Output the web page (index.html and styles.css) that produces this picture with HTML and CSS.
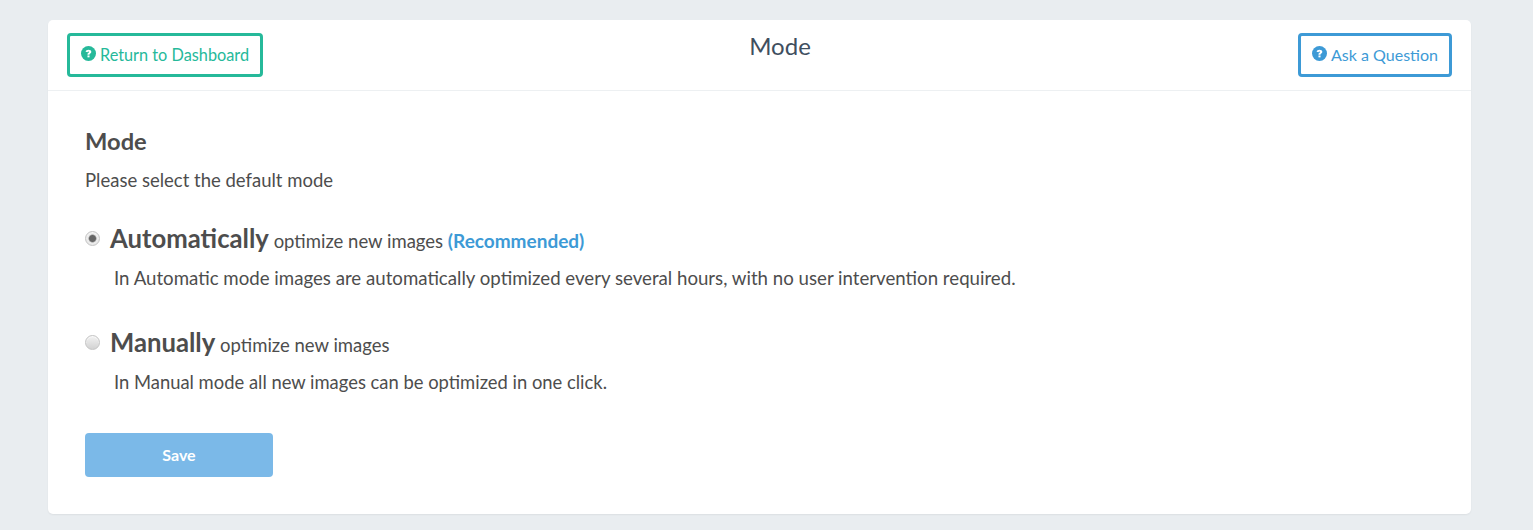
FILE: index.html
```html
<!DOCTYPE html>
<html lang="en">
<head>
    <meta charset="UTF-8">
    <title>Mode</title>
    <link rel="stylesheet" href="styles.css">
</head>
<body>
    <div class="card">
        <div class="card-header">
            <a href="#" class="btn-outline btn-green">
                <svg class="help-icon" viewBox="0 0 16 16"><circle cx="8" cy="8" r="8" fill="currentColor"/><path d="M4.9 6.2c.2-1.4 1.4-2.3 3.1-2.3 1.8 0 3 .9 3 2.3 0 1.1-.7 1.6-1.3 2-.5.3-.7.5-.7 1v.2H6.9v-.4c0-1 .4-1.4 1-1.8.4-.3.7-.5.7-.8 0-.4-.3-.6-.7-.6-.5 0-.8.3-.9.8z" fill="#fff"/><rect x="6.9" y="10.1" width="2.2" height="2" fill="#fff"/></svg>
                Return to Dashboard
            </a>
            <h2 class="card-title">Mode</h2>
            <a href="#" class="btn-outline btn-blue">
                <svg class="help-icon" viewBox="0 0 16 16"><circle cx="8" cy="8" r="8" fill="currentColor"/><path d="M4.9 6.2c.2-1.4 1.4-2.3 3.1-2.3 1.8 0 3 .9 3 2.3 0 1.1-.7 1.6-1.3 2-.5.3-.7.5-.7 1v.2H6.9v-.4c0-1 .4-1.4 1-1.8.4-.3.7-.5.7-.8 0-.4-.3-.6-.7-.6-.5 0-.8.3-.9.8z" fill="#fff"/><rect x="6.9" y="10.1" width="2.2" height="2" fill="#fff"/></svg>
                Ask a Question
            </a>
        </div>

        <form class="card-body">
            <h3 class="section-title">Mode</h3>
            <p class="section-sub">Please select the default mode</p>

            <div class="mode-option">
                <label class="mode-label">
                    <input type="radio" name="mode" class="mode-radio" checked>
                    <span><strong class="mode-name">Automatically</strong> optimize new images <b class="recommended">(Recommended)</b></span>
                </label>
                <p class="mode-desc">In Automatic mode images are automatically optimized every several hours, with no user intervention required.</p>
            </div>

            <div class="mode-option">
                <label class="mode-label">
                    <input type="radio" name="mode" class="mode-radio">
                    <span><strong class="mode-name">Manually</strong> optimize new images</span>
                </label>
                <p class="mode-desc mode-desc-short">In Manual mode all new images can be optimized in one click.</p>
            </div>

            <button type="button" class="btn-save">Save</button>
        </form>
    </div>
</body>
</html>
```

FILE: styles.css
```css
* {
    margin: 0;
    padding: 0;
    box-sizing: border-box;
}

body {
    background-color: #e9edf0;
    font-family: Lato, sans-serif;
    color: #4d4d4d;
    padding: 20px 62px 16px 48px;
}

.card {
    background: white;
    border-radius: 5px;
    box-shadow: 0 1px 2px rgba(0,0,0,0.06);
    height: 494px;
}

.card-header {
    display: grid;
    grid-template-columns: 1fr auto 1fr;
    align-items: start;
    height: 71px;
    padding: 13px 19px 0;
    border-bottom: 1px solid #edf0f2;
}

.card-title {
    margin-left: 41px;
    font-size: 24px;
    font-weight: 400;
    line-height: 26px;
    color: #3f4f5f;
}

.btn-outline {
    display: flex;
    align-items: center;
    gap: 4px;
    height: 44px;
    padding: 0 11px 2px;
    border: 3px solid;
    border-radius: 4px;
    font-size: 16.3px;
    text-decoration: none;
}

.btn-green {
    justify-self: start;
    color: #26b99a;
    border-color: #26b99a;
}

.btn-blue {
    justify-self: end;
    font-size: 16.05px;
    color: #3d9ad6;
    border-color: #3d9ad6;
}

.help-icon {
    width: 15px;
    height: 15px;
    margin-top: -1px;
}

.card-body {
    padding: 36px 37px 0;
}

.section-title {
    font-size: 23.7px;
    font-weight: 700;
    line-height: 28px;
}

.section-sub {
    font-size: 18.5px;
    line-height: 22px;
    margin-top: 14px;
}

.mode-option {
    margin-top: 31px;
}

.mode-option + .mode-option {
    margin-top: 37px;
}

.mode-label {
    display: flex;
    align-items: center;
    gap: 10px;
    font-size: 18.5px;
    line-height: 32px;
}

.mode-radio {
    appearance: none;
    width: 15px;
    height: 15px;
    margin-top: -3px;
    border: 1px solid #c4c4c4;
    border-radius: 50%;
    background: linear-gradient(#f2f2f2, #d2d2d2);
    box-shadow: inset 0 1px 1px rgba(255,255,255,0.7);
}

.mode-radio:checked {
    background: radial-gradient(circle, #666666 0, #666666 3px, #eeeeee 4.5px, #dddddd 100%);
}

.mode-name {
    font-size: 25.7px;
    font-weight: 700;
}

.recommended {
    font-size: 19px;
    color: #3d9ad6;
}

.mode-desc {
    font-size: 18.66px;
    line-height: 22px;
    margin: 10px 0 0 29px;
}

.mode-desc-short {
    font-size: 18.4px;
}

.btn-save {
    display: block;
    width: 188px;
    height: 44px;
    margin-top: 40px;
    padding-bottom: 2px;
    border: none;
    border-radius: 4px;
    background: #7bb9e8;
    color: white;
    font-family: inherit;
    font-size: 16px;
    font-weight: 700;
}
```
